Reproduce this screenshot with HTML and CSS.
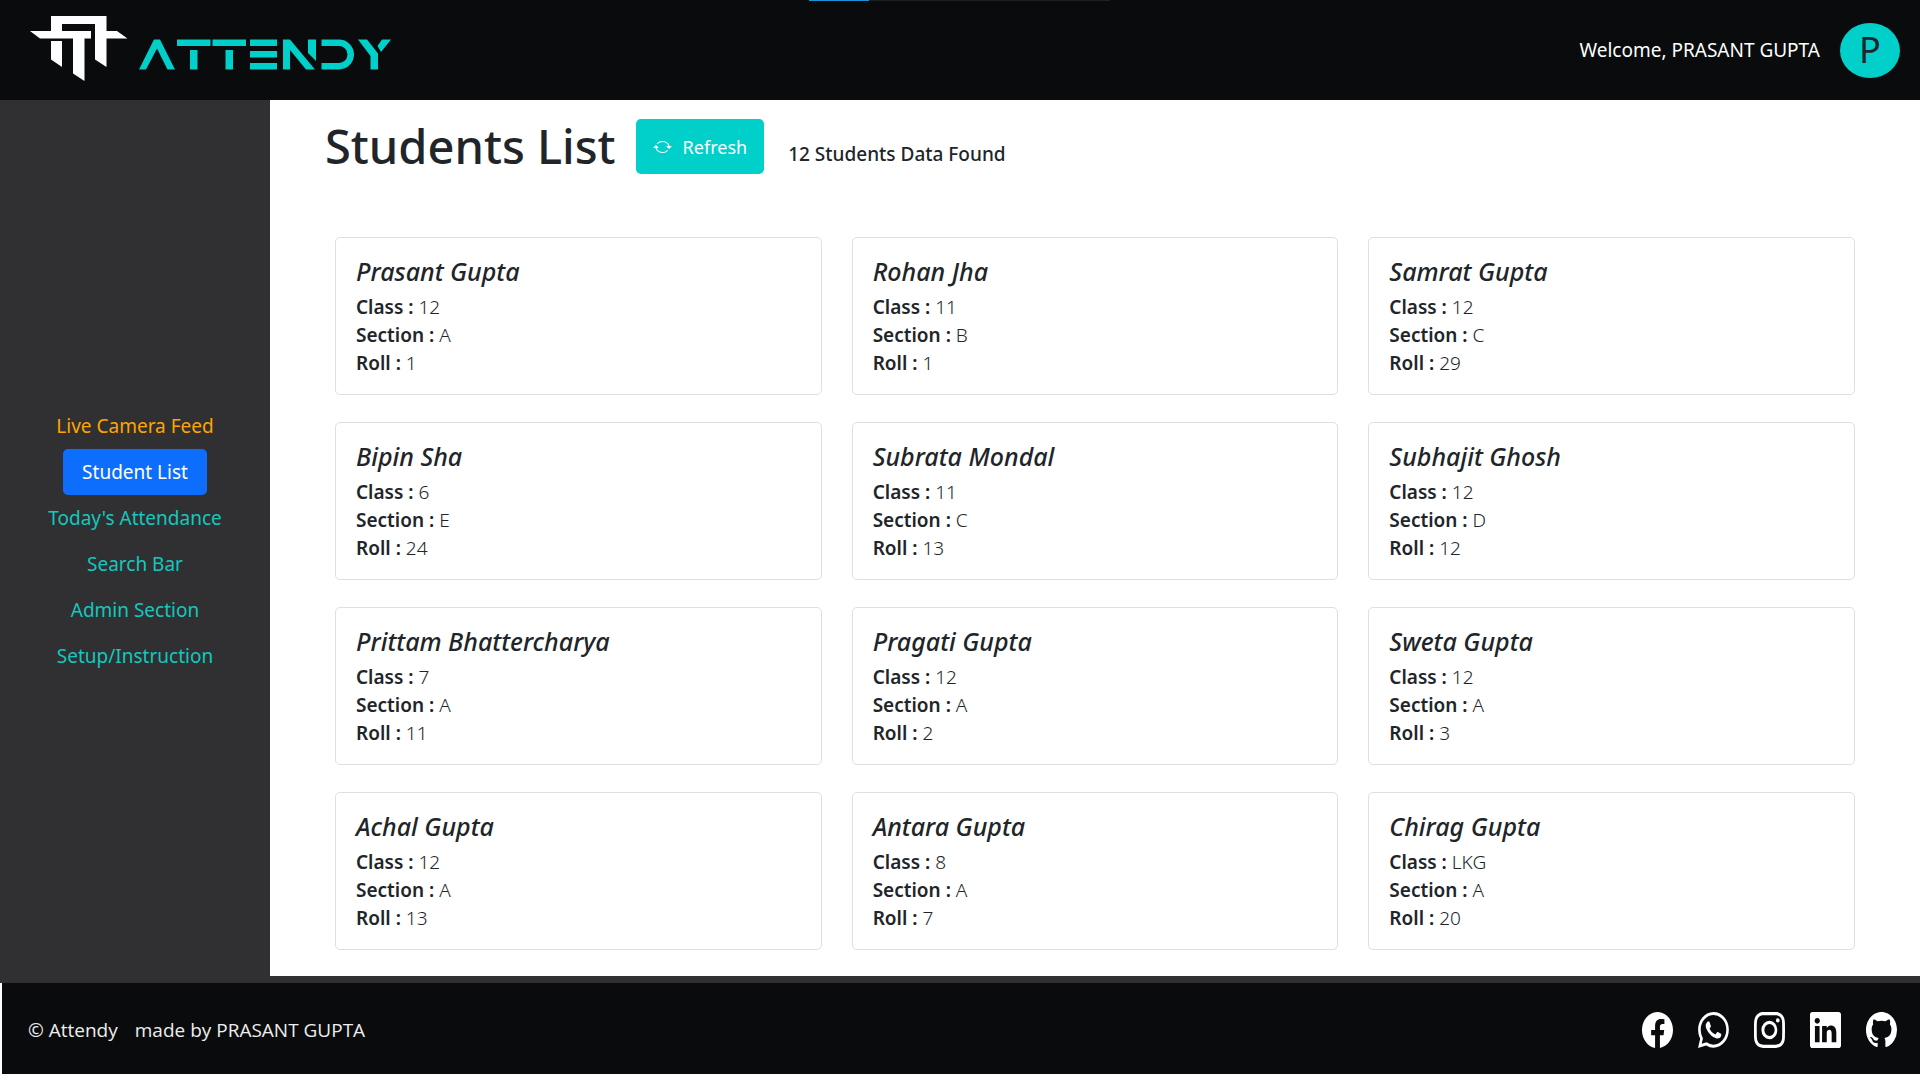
FILE: index.html
```html
<!DOCTYPE html>
<html lang="en">
<head>
<meta charset="utf-8">
<title>Attendy</title>
<link rel="stylesheet" href="styles.css">
</head>
<body>
<header class="topbar">
  <a class="brand" href="#" aria-label="Attendy">
    <svg class="logo" viewBox="28 15 366 70" width="366" height="70" aria-hidden="true">
      <g fill="#fdfdff">
        <path d="M30 31H51V16H106.500V31H117L127.500 38.500H106.500V67L95 59.500V24H62V31H91V38.500H84.500V81L73 73.500V38.500H40Z"/>
        <path d="M51 41H62V67L51 59.500Z"/>
      </g>
      <g fill="#00d0c9">
        <path d="M139 69.500L154 39.500H160L175 69.500H167.500L157 48.500L146 69.500Z"/>
        <path d="M177 39.500H210.500V46H177ZM190 50H197.500V69.500H190Z"/>
        <path d="M212.500 39.500H246V46H212.500ZM225.500 50H233V69.500H225.500Z"/>
        <path d="M250 39.500H277V46H250ZM250 51H277V57.500H250ZM250 63H277V69.500H250Z"/>
        <path d="M283 39.500H290L315 69.500H306L290 50V69.500H283ZM308 39.500H316V61L308 53Z"/>
        <path d="M321.500 39.500H339A15 15 0 0 1 339 69.500H321.500V63H339A8.500 8.500 0 0 0 339 46H321.500Z"/>
        <path d="M358 39.500H367L378 53.500V69.500H370.500V56ZM382 39.500H391L381 52L377.500 46Z"/>
      </g>
    </svg>
  </a>
  <div class="progress" aria-hidden="true"></div>
  <div class="user">
    <span>Welcome, PRASANT GUPTA</span>
    <span class="avatar">P</span>
  </div>
</header>
<div class="body">
  <nav class="sidebar">
    <a class="nav-link live" href="#">Live Camera Feed</a>
    <a class="nav-link active" href="#">Student List</a>
    <a class="nav-link" href="#">Today's Attendance</a>
    <a class="nav-link" href="#">Search Bar</a>
    <a class="nav-link" href="#">Admin Section</a>
    <a class="nav-link" href="#">Setup/Instruction</a>
  </nav>
  <main class="main">
    <div class="heading">
      <h1>Students List</h1>
      <button class="refresh" type="button">
        <svg viewBox="0 0 16 16" width="19" height="16" preserveAspectRatio="none" fill="currentColor" aria-hidden="true"><path d="M11.534 7h3.932a.25.25 0 0 1 .192.410l-1.966 2.360a.25.25 0 0 1-.384 0l-1.966-2.360a.25.25 0 0 1 .192-.410zm-11 2h3.932a.25.25 0 0 0 .192-.410L2.692 6.230a.25.25 0 0 0-.384 0L.342 8.590A.25.25 0 0 0 .534 9z"/><path d="M8 3c-1.552 0-2.940.707-3.857 1.818a.5.5 0 1 1-.771-.636A6.002 6.002 0 0 1 13.917 7H12.900A5.002 5.002 0 0 0 8 3zM3.100 9a5.002 5.002 0 0 0 8.757 2.182.5.5 0 1 1 .771.636A6.002 6.002 0 0 1 2.083 9H3.100z"/></svg>
        Refresh
      </button>
      <p class="count">12 Students Data Found</p>
    </div>
    <div class="cards">
      <article class="card"><h2>Prasant Gupta</h2><p><b>Class :</b> 12</p><p><b>Section :</b> A</p><p><b>Roll :</b> 1</p></article>
      <article class="card"><h2>Rohan Jha</h2><p><b>Class :</b> 11</p><p><b>Section :</b> B</p><p><b>Roll :</b> 1</p></article>
      <article class="card"><h2>Samrat Gupta</h2><p><b>Class :</b> 12</p><p><b>Section :</b> C</p><p><b>Roll :</b> 29</p></article>
      <article class="card"><h2>Bipin Sha</h2><p><b>Class :</b> 6</p><p><b>Section :</b> E</p><p><b>Roll :</b> 24</p></article>
      <article class="card"><h2>Subrata Mondal</h2><p><b>Class :</b> 11</p><p><b>Section :</b> C</p><p><b>Roll :</b> 13</p></article>
      <article class="card"><h2>Subhajit Ghosh</h2><p><b>Class :</b> 12</p><p><b>Section :</b> D</p><p><b>Roll :</b> 12</p></article>
      <article class="card"><h2>Prittam Bhattercharya</h2><p><b>Class :</b> 7</p><p><b>Section :</b> A</p><p><b>Roll :</b> 11</p></article>
      <article class="card"><h2>Pragati Gupta</h2><p><b>Class :</b> 12</p><p><b>Section :</b> A</p><p><b>Roll :</b> 2</p></article>
      <article class="card"><h2>Sweta Gupta</h2><p><b>Class :</b> 12</p><p><b>Section :</b> A</p><p><b>Roll :</b> 3</p></article>
      <article class="card"><h2>Achal Gupta</h2><p><b>Class :</b> 12</p><p><b>Section :</b> A</p><p><b>Roll :</b> 13</p></article>
      <article class="card"><h2>Antara Gupta</h2><p><b>Class :</b> 8</p><p><b>Section :</b> A</p><p><b>Roll :</b> 7</p></article>
      <article class="card"><h2>Chirag Gupta</h2><p><b>Class :</b> LKG</p><p><b>Section :</b> A</p><p><b>Roll :</b> 20</p></article>
    </div>
  </main>
</div>
<footer class="footer">
  <p class="credit"><span>© Attendy</span><span>made by PRASANT GUPTA</span></p>
  <div class="social">
    <a href="#" aria-label="Facebook"><svg viewBox="0 0 16 16" preserveAspectRatio="none"><path d="M16 8.049c0-4.446-3.582-8.050-8-8.050C3.580 0-.002 3.603-.002 8.050c0 4.017 2.926 7.347 6.750 7.951v-5.625h-2.030V8.050H6.750V6.275c0-2.017 1.195-3.131 3.022-3.131.876 0 1.791.157 1.791.157v1.980h-1.009c-.993 0-1.303.621-1.303 1.258v1.510h2.218l-.354 2.326H9.250V16c3.824-.604 6.750-3.934 6.750-7.951z"/></svg></a>
    <a href="#" aria-label="WhatsApp"><svg viewBox="0 0 16 16" preserveAspectRatio="none"><path d="M13.601 2.326A7.854 7.854 0 0 0 7.994 0C3.627 0 .068 3.558.064 7.926c0 1.399.366 2.760 1.057 3.965L0 16l4.204-1.102a7.933 7.933 0 0 0 3.790.965h.004c4.368 0 7.926-3.558 7.930-7.930A7.898 7.898 0 0 0 13.600 2.326zM7.994 14.521a6.573 6.573 0 0 1-3.356-.920l-.240-.144-2.494.654.666-2.433-.156-.251a6.560 6.560 0 0 1-1.007-3.505c0-3.626 2.957-6.584 6.591-6.584a6.560 6.560 0 0 1 4.660 1.931 6.557 6.557 0 0 1 1.928 4.660c-.004 3.639-2.961 6.592-6.592 6.592zm3.615-4.934c-.197-.099-1.170-.578-1.353-.646-.182-.065-.315-.099-.445.099-.133.197-.513.646-.627.775-.114.133-.232.148-.430.050-.197-.100-.836-.308-1.592-.985-.590-.525-.985-1.175-1.103-1.372-.114-.198-.011-.304.088-.403.087-.088.197-.232.296-.346.100-.114.133-.198.198-.330.065-.134.034-.248-.015-.347-.050-.099-.445-1.076-.612-1.470-.160-.389-.323-.335-.445-.340-.114-.007-.247-.007-.380-.007a.729.729 0 0 0-.529.247c-.182.198-.691.677-.691 1.654 0 .977.710 1.916.810 2.049.098.133 1.394 2.132 3.383 2.992.470.205.840.326 1.129.418.475.152.904.129 1.246.080.380-.058 1.171-.480 1.338-.943.164-.464.164-.860.114-.943-.049-.084-.182-.133-.380-.232z"/></svg></a>
    <a href="#" aria-label="Instagram"><svg viewBox="0 0 16 16" preserveAspectRatio="none"><path d="M8 0C5.829 0 5.556.010 4.703.048 3.850.088 3.269.222 2.760.420a3.917 3.917 0 0 0-1.417.923A3.927 3.927 0 0 0 .420 2.760C.222 3.268.087 3.850.048 4.700.010 5.555 0 5.827 0 8.001c0 2.172.010 2.444.048 3.297.040.852.174 1.433.372 1.942.205.526.478.972.923 1.417.444.445.890.719 1.416.923.510.198 1.090.333 1.942.372C5.555 15.990 5.827 16 8 16s2.444-.010 3.298-.048c.851-.040 1.434-.174 1.943-.372a3.916 3.916 0 0 0 1.416-.923c.445-.445.718-.891.923-1.417.197-.509.332-1.090.372-1.942C15.990 10.445 16 10.173 16 8s-.010-2.445-.048-3.299c-.040-.851-.175-1.433-.372-1.941a3.926 3.926 0 0 0-.923-1.417A3.911 3.911 0 0 0 13.240.420c-.510-.198-1.092-.333-1.943-.372C10.443.010 10.172 0 7.998 0h.003zm-.717 1.442h.718c2.136 0 2.389.007 3.232.046.780.035 1.204.166 1.486.275.373.145.640.319.920.599.280.280.453.546.598.920.110.281.240.705.275 1.485.039.843.047 1.096.047 3.231s-.008 2.389-.047 3.232c-.035.780-.166 1.203-.275 1.485a2.470 2.470 0 0 1-.599.919c-.280.280-.546.453-.920.598-.280.110-.704.240-1.485.276-.843.038-1.096.047-3.232.047s-2.390-.009-3.233-.047c-.780-.036-1.203-.166-1.485-.276a2.478 2.478 0 0 1-.920-.598 2.480 2.480 0 0 1-.600-.920c-.109-.281-.240-.705-.275-1.485-.038-.843-.046-1.096-.046-3.233 0-2.136.008-2.388.046-3.231.036-.780.166-1.204.276-1.486.145-.373.319-.640.599-.920.280-.280.546-.453.920-.598.282-.110.705-.240 1.485-.276.738-.034 1.024-.044 2.515-.045v.002zm4.988 1.328a.960.960 0 1 0 0 1.920.960.960 0 0 0 0-1.920zm-4.270 1.122a4.109 4.109 0 1 0 0 8.217 4.109 4.109 0 0 0 0-8.217zm0 1.441a2.667 2.667 0 1 1 0 5.334 2.667 2.667 0 0 1 0-5.334z"/></svg></a>
    <a href="#" aria-label="LinkedIn"><svg viewBox="0 0 16 16" preserveAspectRatio="none"><path d="M0 1.146C0 .513.526 0 1.175 0h13.650C15.474 0 16 .513 16 1.146v13.708c0 .633-.526 1.146-1.175 1.146H1.175C.526 16 0 15.487 0 14.854V1.146zm4.943 12.248V6.169H2.542v7.225h2.401zm-1.200-8.212c.837 0 1.358-.554 1.358-1.248-.015-.709-.520-1.248-1.342-1.248-.822 0-1.359.540-1.359 1.248 0 .694.521 1.248 1.327 1.248h.016zm4.908 8.212V9.359c0-.216.016-.432.080-.586.173-.431.568-.878 1.232-.878.869 0 1.216.662 1.216 1.634v3.865h2.401V9.250c0-2.220-1.184-3.252-2.764-3.252-1.274 0-1.845.700-2.165 1.193v.025h-.016a5.540 5.540 0 0 1 .016-.025V6.169h-2.400c.030.678 0 7.225 0 7.225h2.400z"/></svg></a>
    <a href="#" aria-label="GitHub"><svg viewBox="0 0 16 16" preserveAspectRatio="none"><path d="M8 0C3.580 0 0 3.580 0 8c0 3.540 2.290 6.530 5.470 7.590.400.070.550-.170.550-.380 0-.190-.010-.820-.010-1.490-2.010.370-2.530-.490-2.690-.940-.090-.230-.480-.940-.820-1.130-.280-.150-.680-.520-.010-.530.630-.010 1.080.580 1.230.820.720 1.210 1.870.870 2.330.660.070-.520.280-.870.510-1.070-1.780-.200-3.640-.890-3.640-3.950 0-.870.310-1.590.820-2.150-.080-.200-.360-1.020.080-2.120 0 0 .670-.210 2.200.820.640-.180 1.320-.270 2-.270.680 0 1.360.090 2 .270 1.530-1.040 2.200-.820 2.200-.820.440 1.100.160 1.920.080 2.120.510.560.820 1.270.820 2.150 0 3.070-1.870 3.750-3.650 3.950.290.250.540.730.540 1.480 0 1.070-.010 1.930-.010 2.200 0 .210.150.460.550.380A8.012 8.012 0 0 0 16 8c0-4.420-3.580-8-8-8z"/></svg></a>
  </div>
</footer>
</body>
</html>
```

FILE: styles.css
```css
* {
  box-sizing: border-box;
}

body {
  margin: 0;
  background: #fff;
  color: #212529;
  font-family: "Noto Sans", "Open Sans", sans-serif;
  font-size: 19px;
  line-height: 28px;
}

h1, h2, p {
  margin: 0;
}

a {
  color: inherit;
  text-decoration: none;
}

.topbar {
  position: relative;
  display: flex;
  align-items: center;
  justify-content: space-between;
  height: 100px;
  padding: 0 20px 0 28px;
  background: #090b0d;
  color: #fff;
}

.logo {
  display: block;
}

.progress {
  position: absolute;
  top: 0;
  left: 809px;
  width: 301px;
  height: 1px;
  background: linear-gradient(to right, #1895d3 60px, #1e1f21 60px);
}

.user {
  display: flex;
  align-items: center;
  gap: 20px;
}

.avatar {
  display: flex;
  align-items: center;
  justify-content: center;
  width: 60px;
  height: 55px;
  border-radius: 50%;
  background: #00d0c9;
  color: #212529;
  font-size: 36px;
}

.body {
  display: flex;
  padding-bottom: 7px;
  background: #303032;
}

.sidebar {
  display: flex;
  flex: 0 0 270px;
  flex-direction: column;
  align-items: center;
  justify-content: center;
  padding-top: 6px;
}

.nav-link {
  padding: 9px 19px;
  border-radius: 5px;
  color: #13c8bf;
}

.nav-link.live {
  color: #ffa500;
}

.nav-link.active {
  background: #0d6efd;
  color: #fff;
}

.main {
  flex: 1;
  padding: 19px 65px 26px 55px;
  background: #fff;
}

.heading {
  display: flex;
  align-items: center;
  gap: 20px;
  margin-bottom: 63px;
}

h1 {
  font-size: 47px;
  font-weight: 500;
  line-height: 55px;
}

.refresh {
  display: flex;
  align-items: center;
  gap: 11px;
  height: 55px;
  padding: 0 17px;
  border: 0;
  border-radius: 5px;
  background: #00d0c9;
  color: #fff;
  font: inherit;
  font-size: 18px;
}

.count {
  padding: 14px 0 0 4px;
  font-weight: 500;
}

.cards {
  display: grid;
  grid-template-columns: repeat(3, 1fr);
  gap: 27px 30px;
  padding-left: 10px;
}

.card {
  height: 158px;
  padding: 19px 20px;
  border: 1px solid #dfdfdf;
  border-radius: 5px;
}

.card h2 {
  margin-bottom: 8px;
  font-size: 25px;
  font-style: italic;
  font-weight: 500;
  line-height: 28px;
}

.card p {
  font-weight: 300;
}

.card b {
  font-weight: 600;
}

.footer {
  display: flex;
  align-items: center;
  justify-content: space-between;
  height: 91px;
  margin-left: 2px;
  padding: 3px 23px 0 26px;
  background: #090b0d;
  color: #eee;
}

.credit {
  display: flex;
  gap: 17px;
  font-family: "Open Sans", "Noto Sans", sans-serif;
}

.social {
  display: flex;
  gap: 25px;
}

.social svg {
  display: block;
  width: 31px;
  height: 36px;
  fill: #fff;
}
```
